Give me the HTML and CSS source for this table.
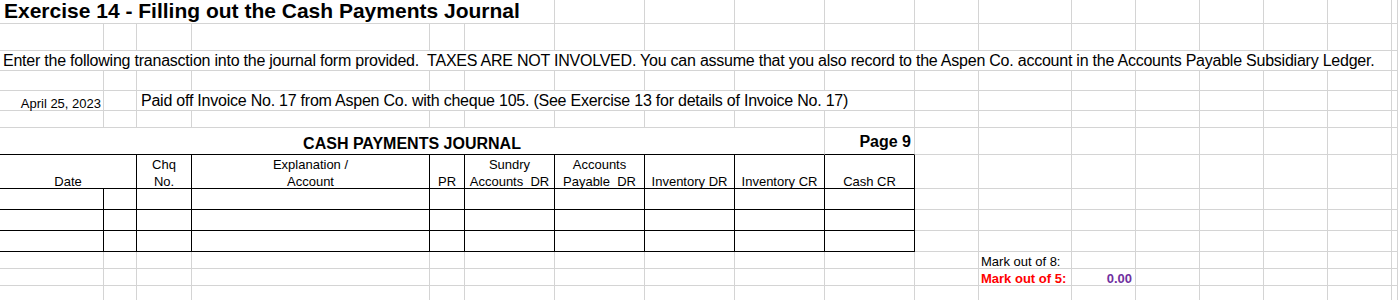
FILE: index.html
```html
<!DOCTYPE html>
<html>
<head>
<meta charset="utf-8">
<link rel="stylesheet" href="styles.css">
</head>
<body>
<div class="sheet">
  <!-- row 1 -->
  <div class="c title s6"><span>Exercise 14 - Filling out the Cash Payments Journal</span></div>
  <div class="c"></div><div class="c"></div><div class="c"></div><div class="c"></div><div class="c"></div><div class="c"></div>
  <div class="c"></div><div class="c"></div><div class="c"></div><div class="c"></div><div class="c"></div><div class="c"></div>
  <!-- row 2 -->
  <div class="c"></div><div class="c"></div><div class="c"></div><div class="c"></div><div class="c"></div><div class="c"></div>
  <div class="c"></div><div class="c"></div><div class="c"></div><div class="c"></div><div class="c"></div><div class="c"></div>
  <div class="c"></div><div class="c"></div><div class="c"></div><div class="c"></div><div class="c"></div><div class="c"></div>
  <!-- row 3 -->
  <div class="c big s17"><span>Enter the following tranasction into the journal form provided.  TAXES ARE NOT INVOLVED. You can assume that you also record to the Aspen Co. account in the Accounts Payable Subsidiary Ledger.</span></div>
  <div class="c"></div>
  <!-- row 4 -->
  <div class="c"></div><div class="c"></div><div class="c"></div><div class="c"></div><div class="c"></div><div class="c"></div>
  <div class="c"></div><div class="c"></div><div class="c"></div><div class="c"></div><div class="c"></div><div class="c"></div>
  <div class="c"></div><div class="c"></div><div class="c"></div><div class="c"></div><div class="c"></div><div class="c"></div>
  <!-- row 5 -->
  <div class="c right"><span>April 25, 2023</span></div>
  <div class="c"></div>
  <div class="c big s8 indent"><span>Paid off Invoice No. 17 from Aspen Co. with cheque 105. (See Exercise 13 for details of Invoice No. 17)</span></div>
  <div class="c"></div><div class="c"></div><div class="c"></div><div class="c"></div><div class="c"></div><div class="c"></div><div class="c"></div><div class="c"></div>
  <!-- row 6 -->
  <div class="c"></div><div class="c"></div><div class="c"></div><div class="c"></div><div class="c"></div><div class="c"></div>
  <div class="c"></div><div class="c"></div><div class="c"></div><div class="c"></div><div class="c"></div><div class="c"></div>
  <div class="c"></div><div class="c"></div><div class="c"></div><div class="c"></div><div class="c"></div><div class="c"></div>
  <!-- row 7 -->
  <div class="c jtitle s9 tb"><span>CASH PAYMENTS JOURNAL</span></div>
  <div class="c page tb right"><span>Page 9</span></div>
  <div class="c"></div><div class="c"></div><div class="c"></div><div class="c"></div><div class="c"></div><div class="c"></div><div class="c"></div><div class="c"></div>
  <!-- row 8: header -->
  <div class="c b hd s2"><span>Date</span></div>
  <div class="c b hd"><span>Chq
No.</span></div>
  <div class="c b hd"><span>Explanation /
Account</span></div>
  <div class="c b hd"><span>PR</span></div>
  <div class="c b hd"><span>Sundry
Accounts  DR</span></div>
  <div class="c b hd"><span>Accounts
Payable  DR</span></div>
  <div class="c b hd"><span>Inventory DR</span></div>
  <div class="c b hd"><span>Inventory CR</span></div>
  <div class="c b hd"><span>Cash CR</span></div>
  <div class="c"></div><div class="c"></div><div class="c"></div><div class="c"></div><div class="c"></div><div class="c"></div><div class="c"></div><div class="c"></div>
  <!-- row 9 -->
  <div class="c b"></div><div class="c b"></div><div class="c b"></div><div class="c b"></div><div class="c b"></div>
  <div class="c b"></div><div class="c b"></div><div class="c b"></div><div class="c b"></div><div class="c b"></div>
  <div class="c"></div><div class="c"></div><div class="c"></div><div class="c"></div><div class="c"></div><div class="c"></div><div class="c"></div><div class="c"></div>
  <!-- row 10 -->
  <div class="c b"></div><div class="c b"></div><div class="c b"></div><div class="c b"></div><div class="c b"></div>
  <div class="c b"></div><div class="c b"></div><div class="c b"></div><div class="c b"></div><div class="c b"></div>
  <div class="c"></div><div class="c"></div><div class="c"></div><div class="c"></div><div class="c"></div><div class="c"></div><div class="c"></div><div class="c"></div>
  <!-- row 11 -->
  <div class="c b"></div><div class="c b"></div><div class="c b"></div><div class="c b"></div><div class="c b"></div>
  <div class="c b"></div><div class="c b"></div><div class="c b"></div><div class="c b"></div><div class="c b"></div>
  <div class="c"></div><div class="c"></div><div class="c"></div><div class="c"></div><div class="c"></div><div class="c"></div><div class="c"></div><div class="c"></div>
  <!-- row 12 -->
  <div class="c"></div><div class="c"></div><div class="c"></div><div class="c"></div><div class="c"></div><div class="c"></div>
  <div class="c"></div><div class="c"></div><div class="c"></div><div class="c"></div><div class="c"></div>
  <div class="c"><span>Mark out of 8:</span></div>
  <div class="c"></div><div class="c"></div><div class="c"></div><div class="c"></div><div class="c"></div><div class="c"></div>
  <!-- row 13 -->
  <div class="c"></div><div class="c"></div><div class="c"></div><div class="c"></div><div class="c"></div><div class="c"></div>
  <div class="c"></div><div class="c"></div><div class="c"></div><div class="c"></div><div class="c"></div>
  <div class="c red"><span>Mark out of 5:</span></div>
  <div class="c right score"><span>0.00</span></div>
  <div class="c"></div><div class="c"></div><div class="c"></div><div class="c"></div><div class="c"></div>
  <!-- row 14 -->
  <div class="c"></div><div class="c"></div><div class="c"></div><div class="c"></div><div class="c"></div><div class="c"></div>
  <div class="c"></div><div class="c"></div><div class="c"></div><div class="c"></div><div class="c"></div><div class="c"></div>
  <div class="c"></div><div class="c"></div><div class="c"></div><div class="c"></div><div class="c"></div><div class="c"></div>
</div>
</body>
</html>
```

FILE: styles.css
```css
html, body {
  margin: 0;
  padding: 0;
  background: #ffffff;
}

body {
  font-family: "Liberation Sans", Arial, sans-serif;
  color: #000000;
  overflow: hidden;
}

.sheet {
  display: grid;
  width: 1398px;
  grid-template-columns: 104px 33px 55px 238px 35px 90px 90px 90px 90px 90px 64px 93px 64px 64px 64px 64px 64px 1fr;
  grid-template-rows: 24px 27px 20px 20px 20px 17px 27px 34px 21px 21px 21px 17px 17px 17px;
}

.c {
  box-sizing: border-box;
  border-right: 1px solid #d4d4d4;
  border-bottom: 1px solid #d4d4d4;
  display: flex;
  align-items: flex-end;
  padding: 0 2px;
  font-size: 13px;
  line-height: 13px;
  white-space: pre;
  min-width: 0;
}

.s2 { grid-column: span 2; }
.s6 { grid-column: span 6; }
.s8 { grid-column: span 8; }
.s9 { grid-column: span 9; }
.s17 { grid-column: span 17; }

.right { justify-content: flex-end; }

.title {
  font-size: 21px;
  line-height: 21px;
  font-weight: bold;
  padding-left: 4px;
  padding-bottom: 2px;
}

.big {
  font-size: 16px;
  line-height: 16px;
  letter-spacing: -0.23px;
  padding-left: 3px;
  padding-bottom: 1px;
}

.indent { padding-left: 4px; }

.jtitle {
  justify-content: center;
  font-size: 16px;
  line-height: 16px;
  font-weight: bold;
  padding-bottom: 2px;
}

.page {
  font-size: 16px;
  line-height: 16px;
  font-weight: bold;
  padding-right: 3px;
  padding-bottom: 4px;
}

.tb { border-bottom-color: #000000; }

.b {
  border-right-color: #000000;
  border-bottom-color: #000000;
}

.hd {
  justify-content: center;
  text-align: center;
  line-height: 17px;
}

.hd span { margin-bottom: -2px; }

.red {
  color: #ff0000;
  font-weight: bold;
}

.score {
  color: #7030a0;
  font-weight: bold;
  padding-right: 3px;
}
```
